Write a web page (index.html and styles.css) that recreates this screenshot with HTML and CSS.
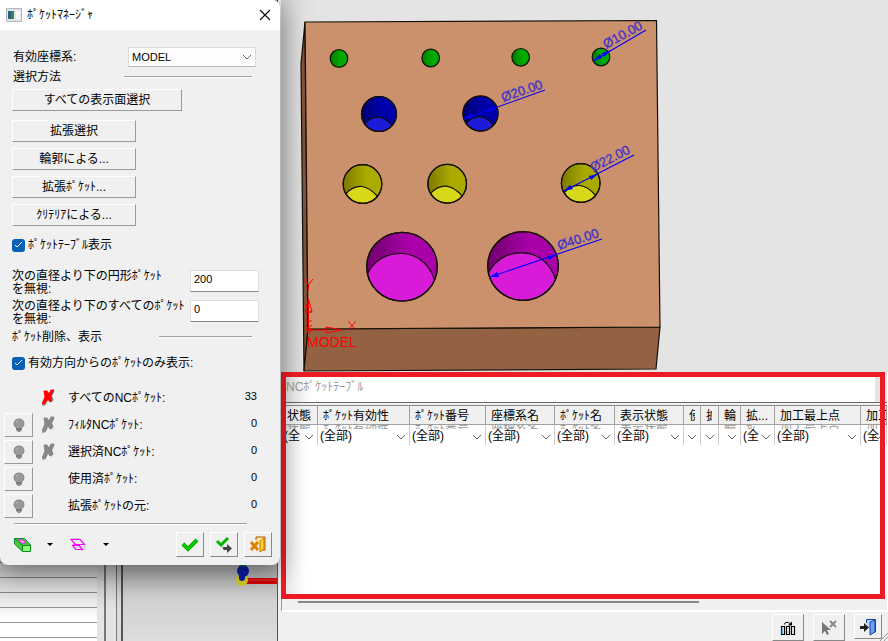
FILE: index.html
```html
<!DOCTYPE html>
<html lang="ja">
<head>
<meta charset="utf-8">
<title>ﾎﾟｹｯﾄﾏﾈｰｼﾞｬ</title>
<link rel="stylesheet" href="styles.css">
</head>
<body>
<main class="desktop">
  <div class="backdrop" aria-hidden="true">
    <div class="lined"></div>
    <div class="rails"></div>
    <div class="mini-view">
      <svg class="axis" viewBox="0 0 44 24"><path d="M12 13H44V19H12Z" fill="#d20505"/><path d="M12 15H44" stroke="#e33" /><circle cx="9" cy="15" r="6" fill="#d5cf25"/><path d="M9 3V13" stroke="#0a1da0" stroke-width="6" stroke-linecap="round"/><circle cx="10" cy="6" r="6" fill="#0a1da8"/><path d="M6 0Q10 3 14 0" fill="#063"/></svg>
    </div>
  </div>

  <svg class="scene" viewBox="281 0 607 372" preserveAspectRatio="xMinYMin slice" role="img" aria-label="MODEL">
    <defs>
      <linearGradient id="bg"><stop offset="0" stop-color="#c9c9c9"/><stop offset=".035" stop-color="#dedede"/><stop offset=".06" stop-color="#e4e4e4"/><stop offset="1" stop-color="#e4e4e4"/></linearGradient>
      <linearGradient id="green"><stop offset="0" stop-color="#007c00"/><stop offset=".6" stop-color="#00aa00"/></linearGradient>
      <linearGradient id="blue"><stop offset="0" stop-color="#00006c"/><stop offset=".55" stop-color="#0000aa"/></linearGradient>
      <linearGradient id="yellow"><stop offset="0" stop-color="#7b7900"/><stop offset=".6" stop-color="#aaaa00"/></linearGradient>
      <linearGradient id="purple"><stop offset="0" stop-color="#740074"/><stop offset=".2" stop-color="#800080"/><stop offset=".6" stop-color="#aa00aa"/></linearGradient>
      <g id="hole-b"><circle r="17.5" fill="url(#blue)"/><path d="M-14.500 9.700Q0-4.500 13 11.600A17.500 17.500 0 0 1-14.500 9.700Z" fill="#1b1bd9"/><circle r="17.500" fill="none"/></g>
      <g id="hole-y"><circle r="19.300" fill="url(#yellow)"/><path d="M-16.500 9.500Q-1-6 15 12.500A19.300 19.300 0 0 1-16.500 9.500Z" fill="#d8d81b"/><circle r="19.300" fill="none"/></g>
      <g id="hole-p"><ellipse rx="35.300" ry="34.300" fill="url(#purple)"/><path d="M-34.500 7C-22-20 22-22 32.500 13.500A35.300 34.300 0 0 1-34.500 7Z" fill="#d81bd8"/><ellipse rx="35.300" ry="34.300" fill="none"/></g>
    </defs>
    <path fill="url(#bg)" d="M281 0H888V372H281Z"/>
    <g stroke="#151008" stroke-width="1.200">
      <path d="M305 22L301 64L304 371L308 328Z" fill="#805238"/>
      <path d="M308 329L660 327L656 369L304 371Z" fill="#936242"/>
      <path d="M305 22L656.500 20.500L660 327L308 329Z" fill="#cb906c"/>
      <g fill="url(#green)"><circle cx="339" cy="58.500" r="8.800"/><circle cx="430.700" cy="58" r="8.800"/><circle cx="520.700" cy="57.300" r="8.800"/><circle cx="601" cy="57" r="8.800"/></g>
      <use href="#hole-b" x="379" y="114"/><use href="#hole-b" x="480.500" y="113.500"/>
      <use href="#hole-y" x="362.500" y="184"/><use href="#hole-y" x="447.200" y="183.700"/><use href="#hole-y" x="580.700" y="183"/>
      <use href="#hole-p" x="402" y="266.700"/><use href="#hole-p" x="523" y="266"/>
    </g>
    <g stroke="#00f" fill="#00f" stroke-width="1.100">
      <path d="M593 61L646 30M464 119L545 90M564 191L634 155M490 277L602 239"/>
      <path d="M593 61L600 54L602 58ZM611 50L602 53L604 57ZM464 119L471 113L473 118ZM497 107L488 108L490 112ZM564 191L570 185L573 189ZM598 174L589 176L591 180ZM490 277L497 272L499 277ZM556 255L547 256L549 260Z" stroke="none"/>
    </g>
    <g class="dim">
      <text transform="translate(606 49) rotate(-29)">Ø10.00</text>
      <text transform="translate(503 102) rotate(-19)">Ø20.00</text>
      <text transform="translate(593 172) rotate(-27)">Ø22.00</text>
      <text transform="translate(559 250) rotate(-18)">Ø40.00</text>
    </g>
    <g stroke="#f00" fill="none">
      <path d="M308.500 328V300M305 312H312L308.500 299ZM305 312H312M308 330H326M326 327V333L342 330ZM306 321H312M305 326L312 330M305 330L312 325M304 279L308.500 285L313 279M308.500 285V290M348 321L356 330M356 321L348 330"/><circle cx="309" cy="331" r="2"/>
    </g>
    <text class="model" x="307" y="347">MODEL</text>
  </svg>

  <section class="table-panel" aria-label="NCﾎﾟｹｯﾄﾃｰﾌﾞﾙ">
    <div class="sheet">
      <h2>NCﾎﾟｹｯﾄﾃｰﾌﾞﾙ</h2>
      <div class="grid-wrap">
      <table>
        <colgroup><col class="c36"><col class="c92"><col class="c76"><col class="c69"><col class="c60"><col class="c69"><col class="c17"><col class="c18"><col class="c22"><col class="c34"><col class="c86"><col></colgroup>
        <thead><tr><th>状態</th><th>ﾎﾟｹｯﾄ有効性</th><th>ﾎﾟｹｯﾄ番号</th><th>座標系名</th><th>ﾎﾟｹｯﾄ名</th><th>表示状態</th><th><span>使</span></th><th><span>拡</span></th><th>輪</th><th>拡...</th><th>加工最上点</th><th>加工</th></tr></thead>
        <tbody><tr>
          <td data-label="状態"><button type="button">(全</button></td><td data-label="ﾎﾟｹｯﾄ有効性"><button type="button">(全部)</button></td><td data-label="ﾎﾟｹｯﾄ番号"><button type="button">(全部)</button></td><td data-label="座標系名"><button type="button">(全部)</button></td><td data-label="ﾎﾟｹｯﾄ名"><button type="button">(全部)</button></td><td data-label="表示状態"><button type="button">(全部)</button></td><td><button type="button" aria-label="使"></button></td><td><button type="button" aria-label="拡"></button></td><td data-label="輪"><button type="button" aria-label="輪"></button></td><td data-label="拡..."><button type="button">(全</button></td><td data-label="加工最上点"><button type="button">(全部)</button></td><td data-label="加工"><button type="button">(全</button></td>
        </tr></tbody>
      </table>
      </div>
      <div class="scroll"></div>
    </div>
    <footer>
      <button type="button" class="tool" aria-label="列"><svg width="16" height="16" viewBox="0 0 16 16" fill="none" stroke="#000"><path d="M1.500 6.500H4.500V14.500H1.500ZM6.500 6.500H9.500V14.500H6.500ZM11.500 6.500H14.500V14.500H11.500Z" stroke-width="1.200"/><path d="M4.500 4.500V3.500L6 2.500H8.500L10.500 4"/><path d="M12 1.500V5.500H8Z" fill="#000" stroke="none"/><path d="M2 14V8" stroke="#08c"/></svg></button>
      <button type="button" class="tool" aria-label="選択解除"><svg width="16" height="16" viewBox="0 0 16 16"><path d="M1 2V14L4 11L6 15L8 14L6 10H10Z" fill="#777"/><path d="M9 1L15 7M15 1L9 7" stroke="#888" stroke-width="2"/></svg></button>
      <button type="button" class="tool small" aria-label="閉じる"><svg width="18" height="18" viewBox="0 0 18 18"><path d="M7.500 5V1.500H16.500V14H12" fill="#b9d5ff" stroke="#123e9c"/><path d="M11 4L16 2V14L11 17Z" fill="#6da2f4" stroke="#123e9c"/><path d="M1 8H5V5L10 9.500L5 14V11H1Z" fill="#222"/></svg></button>
    </footer>
    <svg class="grip" viewBox="0 0 8 8" aria-hidden="true"><path d="M0 8L8 0M4 8L8 4" stroke="#999"/></svg>
    <div class="highlight" aria-hidden="true"></div>
  </section>

  <form class="dialog" aria-label="ﾎﾟｹｯﾄﾏﾈｰｼﾞｬ">
    <header>
      <svg width="16" height="14" viewBox="0 0 16 14" aria-hidden="true"><path d="M.5.500H15.500V13.500H.500Z" fill="#e5e5e5" stroke="#b0b7bd"/><path d="M2 3H8V11H2Z" fill="#2b8a64"/><path d="M2 3H5V11H2Z" fill="#315d7c"/><path d="M10 3H14V11H10Z" fill="#fafafa"/></svg>
      <h1>ﾎﾟｹｯﾄﾏﾈｰｼﾞｬ</h1>
      <button type="button" class="close" aria-label="閉じる"><svg width="12" height="12" viewBox="0 0 12 12"><path d="M1 1L11 11M11 1L1 11" stroke="#111" stroke-width="1.200"/></svg></button>
    </header>
    <div class="body">
      <div class="row csys"><label for="csys">有効座標系:</label><select id="csys"><option>MODEL</option></select></div>
      <div class="rule-row method"><span>選択方法</span><hr></div>
      <div class="stack">
        <button type="button" class="wide">すべての表示面選択</button>
        <button type="button">拡張選択</button>
        <button type="button">輪郭による...</button>
        <button type="button">拡張ﾎﾟｹｯﾄ...</button>
        <button type="button">ｸﾘﾃﾘｱによる...</button>
      </div>
      <label class="check"><input type="checkbox" checked><span>ﾎﾟｹｯﾄﾃｰﾌﾞﾙ表示</span></label>
      <div class="fields">
        <label for="d1">次の直径より下の円形ﾎﾟｹｯﾄ<br>を無視:</label><input id="d1" type="text" value="200">
        <label for="d2">次の直径より下のすべてのﾎﾟｹｯﾄ<br>を無視:</label><input id="d2" type="text" value="0">
      </div>
      <div class="rule-row remove"><span>ﾎﾟｹｯﾄ削除、表示</span><hr></div>
      <label class="check second"><input type="checkbox" checked><span>有効方向からのﾎﾟｹｯﾄのみ表示:</span></label>
      <svg class="defs" aria-hidden="true"><defs>
        <g id="bulb"><path d="M6 1Q11 1 11 6Q11 8 8.500 10V12L7 13.500H5L3.500 12V10Q1 8 1 6Q1 1 6 1Z" fill="#999" stroke="#858585"/><path d="M4 10H8V12H4Z" fill="#777"/><path d="M3 5Q3 3 5 3" stroke="#b8b8b8" fill="none"/></g>
        <g id="cross"><path d="M2 2H5L7 5L9 1H12L9 7L10 11L8 13L6 10L3 15H0L3 8Z" fill="currentColor" stroke="currentColor"/><path d="M12 2L9.500 7L11 11L9 13.500M5 12L3 16H0" stroke="#777" fill="none"/></g>
      </defs></svg>
      <ul class="counts">
        <li><i></i><svg class="x red" viewBox="0 0 13 17"><use href="#cross"/></svg><span>すべてのNCﾎﾟｹｯﾄ:</span><output>33</output></li>
        <li><button type="button" aria-label="ﾌｨﾙﾀNCﾎﾟｹｯﾄ"><svg width="12" height="14"><use href="#bulb"/></svg></button><svg class="x" viewBox="0 0 13 17"><use href="#cross"/></svg><span>ﾌｨﾙﾀNCﾎﾟｹｯﾄ:</span><output>0</output></li>
        <li><button type="button" aria-label="選択済NCﾎﾟｹｯﾄ"><svg width="12" height="14"><use href="#bulb"/></svg></button><svg class="x" viewBox="0 0 13 17"><use href="#cross"/></svg><span>選択済NCﾎﾟｹｯﾄ:</span><output>0</output></li>
        <li><button type="button" aria-label="使用済ﾎﾟｹｯﾄ"><svg width="12" height="14"><use href="#bulb"/></svg></button><i></i><span>使用済ﾎﾟｹｯﾄ:</span><output>0</output></li>
        <li><button type="button" aria-label="拡張ﾎﾟｹｯﾄの元"><svg width="12" height="14"><use href="#bulb"/></svg></button><i></i><span>拡張ﾎﾟｹｯﾄの元:</span><output>0</output></li>
      </ul>
      <hr class="last">
      <div class="actions">
        <div class="views">
          <button type="button" class="flat" aria-label="面"><svg width="17" height="16" viewBox="0 0 17 16"><path d="M.5 1.500H10.500L16.500 8V14.500H8.500L.5 7Z" fill="#47cc35" stroke="#098d2c"/><path d="M.5 1.500L8.500 8.500H16.500M8.500 8.500V14.500" fill="none" stroke="#098d2c"/><path d="M9 9H16V14H9Z" fill="#8dff6e"/><path d="M4.500 3H9L12 6H7.500Z" fill="#fbf" stroke="#f0f"/></svg></button>
          <button type="button" class="flat arrow" aria-label="面の一覧"></button>
          <button type="button" class="flat" aria-label="線"><svg width="17" height="16" viewBox="0 0 17 16" fill="none"><path d="M1 2L9 1.500L15 7.500V11L12 13.500M4 5V8" stroke="#bbb"/><path d="M1 2.500H10L14.500 7.500H5.500ZM2 8.500L5.500 7.500M2 8.500H10M3 9L6 12.500H12.500L9 8.500" stroke="#f0f" stroke-width="1.200"/></svg></button>
          <button type="button" class="flat arrow" aria-label="線の一覧"></button>
        </div>
        <div class="confirm">
          <button type="button" class="tool" aria-label="OK"><svg width="18" height="14" viewBox="0 0 18 14"><path d="M2 6L7 11L16 2" fill="none" stroke="#009a00" stroke-width="4"/><path d="M2 6L7 11L16 2" fill="none" stroke="#00cc00" stroke-width="2.500"/></svg></button>
          <button type="button" class="tool" aria-label="適用"><svg width="18" height="16" viewBox="0 0 18 16"><path d="M2 4L6 8L13 1" fill="none" stroke="#00b800" stroke-width="3"/><path d="M8 8V10H12V7L17 11.500L12 16V13H9Q7 12 8 8Z" fill="#444"/></svg></button>
          <button type="button" class="tool" aria-label="取消"><svg width="18" height="17" viewBox="0 0 18 17"><path d="M7 4V1H16V14H12" fill="#ffe9a0" stroke="#a85400"/><path d="M11 5L15 2V13L11 16Z" fill="#ffd42c" stroke="#c87800"/><path d="M2 6L9 14M9 6L2 14" stroke="#d98200" stroke-width="3"/></svg></button>
        </div>
      </div>
    </div>
  </form>
</main>
</body>
</html>
```

FILE: styles.css
```css
* { box-sizing: border-box; }
body {
  margin: 0;
  background: #f0f0f0;
  color: #000;
  font: 12px/14px "Liberation Sans", "Noto Sans CJK JP", sans-serif;
}
button, input, select { font: inherit; color: inherit; }
h1, h2 { margin: 0; font-size: 12px; font-weight: 400; }
hr { margin: 0; border: 0; border-top: 1px solid #a0a0a0; border-bottom: 1px solid #fff; }

.desktop {
  position: relative;
  display: grid;
  grid-template-columns: 281px minmax(0, 1fr);
  grid-template-rows: 372px 1fr;
  min-height: 100vh;
  overflow: hidden;
}

.backdrop {
  grid-row: 1 / 3;
  display: grid;
  grid-template-columns: 97px 26px 155px;
  background: #f0f0f0;
}
.lined { background: linear-gradient(#0004 565px, #0000 620px), repeating-linear-gradient(#fff 0 7px, #999 7px 8px, #fff 8px 15px); }
.rails {
  background:
    linear-gradient(#0003 565px, #0000 610px),
    linear-gradient(90deg, #e4e4e4 0 7px, #777 7px 9px, #e4e4e4 9px 19px, #777 19px 20px, #ddd 20px 24px, #555 24px 26px);
}
.mini-view {
  border-right: 1px solid #555;
  padding-top: 565px;
  background: linear-gradient(#aaa 565px, #d0d0d0 600px, #dedede);
}
.axis { display: block; width: 44px; height: 24px; margin-left: auto; }

.scene { display: block; width: 100%; height: 372px; }
.dim text { font: 13px "Liberation Sans", sans-serif; fill: #3c32c8; stroke: #3c32c8; stroke-width: 0.3px; }
.model { font: 14px "Liberation Sans", sans-serif; fill: #f00; }

.table-panel { position: relative; display: flex; flex-direction: column; min-width: 0; background: #f0f0f0; }
.sheet {
  flex: 1;
  display: flex;
  flex-direction: column;
  border-right: 1px solid #fff;
  border-bottom: 2px solid #fff;
  border-left: 1px solid #999;
}
.sheet h2 { height: 30px; padding: 8px 4px; color: #999; background: linear-gradient(90deg, #ddd, #fff 30px); border-right: 12px solid #e4e4e4; }
.grid-wrap {
  flex: 1;
  padding-top: 2px;
  border-top: 1px solid #666;
  background: linear-gradient(#f0f0f0 2px, #0000 2px), linear-gradient(90deg, #e4e4e4, #fff 24px);
  overflow: hidden;
}
table { width: 100%; table-layout: fixed; border-collapse: separate; border-spacing: 0; }
.c17 { width: 17px; } .c18 { width: 18px; } .c22 { width: 22px; } .c34 { width: 34px; } .c36 { width: 36px; }
.c60 { width: 60px; } .c69 { width: 69px; } .c76 { width: 76px; } .c86 { width: 86px; } .c92 { width: 92px; }
th {
  height: 20px;
  padding: 1px 0 0 5px;
  border-top: 1px solid #888;
  border-right: 1px solid #a0a0a0;
  border-bottom: 1px solid #a0a0a0;
  background: #f0f0f0;
  font-weight: 400;
  text-align: left;
  white-space: nowrap;
  overflow: hidden;
}
th span { display: block; width: 6px; overflow: hidden; }
td { height: 20px; padding: 0; border-right: 1px solid #ccc; vertical-align: top; }
td::before {
  content: attr(data-label);
  display: block;
  height: 4px;
  padding-left: 5px;
  overflow: hidden;
  color: #999;
  line-height: 8px;
  white-space: nowrap;
}
td button {
  display: block;
  width: 100%;
  height: 16px;
  padding: 0 14px 2px 2px;
  border: 0;
  overflow: hidden;
  text-align: left;
  white-space: nowrap;
  background: url("data:image/svg+xml,%3Csvg xmlns='http://www.w3.org/2000/svg' width='10' height='6'%3E%3Cpath d='M1 1l4 4 4-4' fill='none' stroke='%23666'/%3E%3C/svg%3E") right 3px center no-repeat;
}
.scroll { height: 16px; padding: 7px 16px; background: #f0f0f0; }
.scroll::before { content: ""; display: block; width: 70%; height: 2px; background: #888; }
.highlight { position: absolute; inset: 0 3px 42px 0; border: 5px solid #ed1c24; pointer-events: none; }
.table-panel footer { display: flex; justify-content: flex-end; gap: 9px; height: 29px; padding: 2px 6px 0 0; }
.tool {
  display: grid;
  place-items: center;
  width: 28px;
  height: 25px;
  padding: 0;
  border: 1px solid #fff;
  border-right-color: #888;
  border-bottom-color: #888;
  background: #f0f0f0;
}
.table-panel .tool { width: 32px; height: 27px; }
.table-panel .small { width: 28px; height: 25px; }
.grip { position: absolute; right: 0; bottom: 0; width: 8px; height: 8px; }

.dialog {
  position: absolute;
  top: 0;
  left: 0;
  width: 280px;
  border-radius: 0 8px 8px 8px;
  background: #f0f0f0;
  box-shadow: 0 0 1px #777, 0 8px 24px #0006;
}
.dialog header { display: flex; align-items: center; gap: 5px; height: 30px; padding: 0 9px 0 6px; background: #fff; border-radius: 0 8px 0 0; }
.close { margin-left: auto; padding: 0; border: 0; background: none; line-height: 0; }
.body { padding: 17px 20px 8px 12px; }
.row { display: flex; align-items: center; }
.csys { justify-content: space-between; padding: 0 4px 0 1px; height: 20px; }
select {
  width: 128px;
  height: 20px;
  padding: 0 3px;
  border: 1px solid #ddd;
  border-bottom-color: #bbb;
  appearance: none;
  font-size: 11px;
  background: #fdfdfd url("data:image/svg+xml,%3Csvg xmlns='http://www.w3.org/2000/svg' width='10' height='6'%3E%3Cpath d='M1 1l4 4 4-4' fill='none' stroke='%23666'/%3E%3C/svg%3E") right 3px center no-repeat;
}
.rule-row { display: flex; justify-content: space-between; align-items: center; height: 14px; padding-right: 8px; }
.method { margin-top: 3px; padding-left: 1px; }
.method hr { width: 128px; }
.remove hr { width: 93px; }
.stack { display: grid; justify-items: start; gap: 6px; margin-top: 5px; }
.stack button { width: 124px; height: 22px; padding: 0; border: 1px solid #fff; border-right-color: #999; border-bottom: 1px solid #999; background: #f0f0f0; }
.stack .wide { width: 170px; margin-bottom: 3px; }
.check { display: flex; align-items: center; gap: 3px; height: 14px; margin-top: 12px; }
.check input {
  appearance: none;
  width: 13px;
  height: 13px;
  margin: 0;
  border-radius: 3px;
  background: #0560b6 url("data:image/svg+xml,%3Csvg xmlns='http://www.w3.org/2000/svg' width='9' height='8'%3E%3Cpath d='M1 4l2 2 5-5' fill='none' stroke='%23fff'/%3E%3C/svg%3E") center no-repeat;
}
.fields { display: grid; grid-template-columns: 1fr 70px; row-gap: 4px; margin-top: 18px; }
.fields label { line-height: 13px; white-space: nowrap; }
.fields input { width: 69px; height: 22px; padding: 0 3px 4px; border: 1px solid #ddd; border-bottom-color: #888; background: #fff; font-size: 11px; }
.remove { margin-top: 4px; }
.second { margin-top: 12px; }
.defs { display: block; width: 0; height: 0; }
.counts { margin: 14px 0 0 -8px; padding: 0; list-style: none; }
.counts li { display: grid; grid-template-columns: 28px 10px 14px 12px 1fr auto; align-items: center; height: 27px; padding-right: 3px; }
.counts li > :nth-child(2) { grid-column: 3; }
.counts span { grid-column: 5; }
.counts output { padding-bottom: 4px; font-size: 11px; }
.counts button { display: grid; place-items: center; width: 29px; height: 24px; padding: 0; border: 1px solid #fff; border-right-color: #999; border-bottom-color: #999; background: #f0f0f0; }
.x { width: 13px; height: 17px; color: #888; }
.red { color: #f00; }
.last { margin: 4px 13px 0 2px; }
.actions { display: flex; align-items: center; justify-content: space-between; margin: 7px -12px 0 0; }
.views { display: flex; gap: 8px; }
.confirm { display: flex; gap: 6px; }
.flat { width: 20px; height: 20px; padding: 0; border: 0; background: none; display: grid; place-items: center; }
.arrow::before { content: ""; border: 3px solid transparent; border-top-color: #000; border-bottom: 0; }
```
